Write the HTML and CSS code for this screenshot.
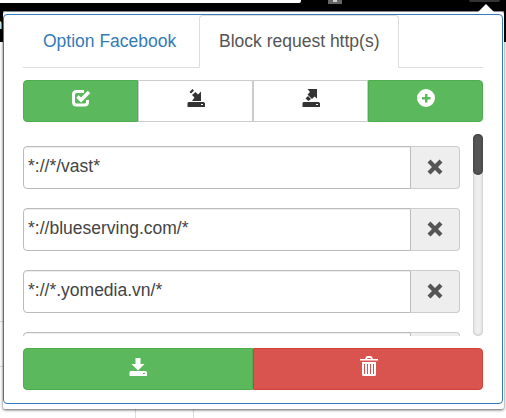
FILE: index.html
```html
<!DOCTYPE html>
<html lang="en">
<head>
<meta charset="utf-8">
<title>Block request http(s)</title>
<link rel="stylesheet" href="styles.css">
</head>
<body>
<div class="backdrop">
  <div class="address"></div>
  <div class="toolbar"><span class="letter">n</span></div>
  <span class="ext"><i></i></span><span class="ext-active"></span>
  <i class="rule rule-a"></i><i class="rule rule-b"></i><i class="col col-a"></i><i class="col col-b"></i>
</div>
<div class="popup">
  <span class="arrow"></span>
  <main class="panel">
    <nav class="tabs">
      <a class="tab">Option Facebook</a>
      <a class="tab active">Block request http(s)</a>
    </nav>
    <div class="group">
      <button class="btn green"><svg viewBox="0 0 18 18"><path d="M12 2.500H4.500Q1.500 2.500 1.500 5.500V13Q1.500 16 4.500 16H12.500Q15.500 16 15.500 13V11" fill="none" stroke="currentColor" stroke-width="3"/><path d="M5.500 7.500 9 11 17 3" fill="none" stroke="currentColor" stroke-width="3.600"/></svg></button>
      <button class="btn plain"><svg viewBox="0 0 18 18"><path d="M2.500 3 5.500 0 7 1.500 4 4.500zM5 6 8.500 3 11 5.500 14 2.500V12H5L7.500 8.500zM1.500 13H16.500L18 14V18H.5V14z"/><path d="M14 15h2v1h-2z" fill="#fff"/></svg></button>
      <button class="btn plain"><svg viewBox="0 0 18 18"><path d="M5.500 0H15V9.500L12.500 7.500 10 10 5.500 5.500 8 3zM6 7 9 10 6.500 12 3.500 9.500zM1.500 13H16.500L18 14V18H.5V14z"/><path d="M14 15h2v1h-2z" fill="#fff"/></svg></button>
      <button class="btn green"><svg viewBox="0 0 18 18"><path fill-rule="evenodd" d="M9 0a9 9 0 1 0 0 18A9 9 0 0 0 9 0M8 5h2.500v3h3v2.500h-3v3H8v-3H5V8h3z"/></svg></button>
    </div>
    <section class="list-area">
      <div class="list">
        <div class="row"><input value="*://*/vast*"><span class="remove"><svg viewBox="0 0 18 18"><path d="M4.500 1.500 9 6 13.500 1.500 16.500 4.500 12 9 16.500 13.500 13.500 16.500 9 12 4.500 16.500 1.500 13.500 6 9 1.500 4.500z"/></svg></span></div>
        <div class="row"><input value="*://blueserving.com/*"><span class="remove"><svg viewBox="0 0 18 18"><path d="M4.500 1.500 9 6 13.500 1.500 16.500 4.500 12 9 16.500 13.500 13.500 16.500 9 12 4.500 16.500 1.500 13.500 6 9 1.500 4.500z"/></svg></span></div>
        <div class="row"><input value="*://*.yomedia.vn/*"><span class="remove"><svg viewBox="0 0 18 18"><path d="M4.500 1.500 9 6 13.500 1.500 16.500 4.500 12 9 16.500 13.500 13.500 16.500 9 12 4.500 16.500 1.500 13.500 6 9 1.500 4.500z"/></svg></span></div>
        <div class="row"><input><span class="remove"></span></div>
      </div>
      <div class="track"><div class="thumb"></div></div>
    </section>
    <div class="group">
      <button class="btn green"><svg class="save" viewBox="0 0 18 18"><path d="M6.500 0h5v6H15.500L9 12.500 2.500 6h4zM1.500 13H16.500L18 14V18H.5V14z"/><path d="M14 15h2v1h-2z" fill="#5cb85c"/></svg></button>
      <button class="btn red"><svg class="trash" viewBox="0 0 18 20"><path fill-rule="evenodd" d="M0 3h5l1-2q.5-1 1.500-1h3q1 0 1.500 1l1 2h5v1.500H0zM7 3h4l-.5-1h-3zM2 6h14v12.500q0 1.500-1.500 1.500h-11Q2 20 2 18.500zM4 8v10h1V8zM7 8v10h1V8zM10 8v10h1V8zM13 8v10h1V8z"/></svg></button>
    </div>
  </main>
</div>
</body>
</html>
```

FILE: styles.css
```css
* { box-sizing: border-box; }
body { margin: 0; width: 506px; height: 418px; overflow: hidden; position: relative; background: #fff; font: 17.5px/26px "Liberation Sans", Arial, sans-serif; color: #555; }
.backdrop { position: absolute; inset: 0; overflow: hidden; }
.toolbar { height: 42px; background: #000; }
.address { position: absolute; left: 0; top: 0; width: 301px; height: 3px; background: #fff; border-bottom-right-radius: 2px; }
.letter { position: absolute; left: -6px; top: 11px; font-size: 15px; color: #fff; }
.ext { position: absolute; left: 328px; top: 0; width: 14px; height: 4px; background: #666; }
.ext i { display: block; width: 4px; height: 2px; margin-left: 5px; background: #ccc; }
.ext-active { position: absolute; left: 469px; top: 0; width: 31px; height: 2px; background: #333; border-radius: 0 0 2px 2px; }
.rule { position: absolute; left: 0; width: 4px; height: 1px; background: #ddd; }
.rule-a { top: 321px; }
.rule-b { top: 366px; }
.col { position: absolute; top: 409px; width: 1px; height: 9px; background: #ddd; }
.col-a { left: 135px; }
.col-b { left: 193px; }
.popup { position: relative; width: 501px; height: 398px; margin: 11px 0 0 3px; padding-top: 3px; background: #fff; border-radius: 2px; box-shadow: 0 1px 3px rgba(0,0,0,.65), inset 0 1px #888; display: flow-root; }
.arrow { position: absolute; left: 475px; top: -7px; border: solid transparent; border-width: 0 8px 8px; border-bottom-color: #fff; }
.panel { width: 500px; height: 390px; border: 1px solid #337ab7; border-radius: 4px; padding: 0 19px; background: #fff; }
.tabs { display: flex; height: 53px; border-bottom: 1px solid #ddd; }
.tab { height: 53px; padding: 12px 19px; border: 1px solid transparent; border-radius: 4px 4px 0 0; color: #337ab7; width: 174px; margin-right: 2px; white-space: nowrap; }
.tab.active { width: 200px; margin: 0; color: #555; background: #fff; border-color: #ddd #ddd #fff; }
.group { display: flex; height: 42px; margin-top: 12px; }
.btn { flex: 1; padding: 0 0 6px; border: 1px solid #ccc; display: flex; align-items: center; justify-content: center; font: inherit; }
.btn:first-child { border-radius: 4px 0 0 4px; }
.btn:last-child { border-radius: 0 4px 4px 0; }
.green { color: #fff; background: #5cb85c; border-color: #4cae4c; }
.red { color: #fff; background: #d9534f; border-color: #d43f3a; }
.plain { color: #333; background: #fff; }
svg { display: block; width: 18px; height: 18px; fill: currentColor; }
.save { margin-top: 1px; }
.trash { height: 20px; margin-left: 2px; }
.list-area { height: 202px; margin-top: 12px; display: flex; justify-content: space-between; }
.list { width: 437px; height: 202px; padding-top: 12px; overflow: hidden; }
.row { display: flex; height: 43px; margin-bottom: 19px; }
.row input { width: 388px; height: 43px; padding: 0 4px 3px; border: 1px solid #bbb; border-radius: 4px 0 0 4px; font: inherit; color: #444; background: #fff; box-shadow: inset 0 1px 1px rgba(0,0,0,.075); }
.remove { width: 49px; padding-bottom: 2px; border: 1px solid #ccc; border-left: 0; border-radius: 0 4px 4px 0; background: #eee; display: flex; align-items: center; justify-content: center; }
.track { width: 10px; height: 202px; border-radius: 5px; background: #eee; box-shadow: inset 0 0 3px #aaa; }
.thumb { height: 41px; border-radius: 5px; background: #555; box-shadow: inset 0 0 3px #333; }
```
